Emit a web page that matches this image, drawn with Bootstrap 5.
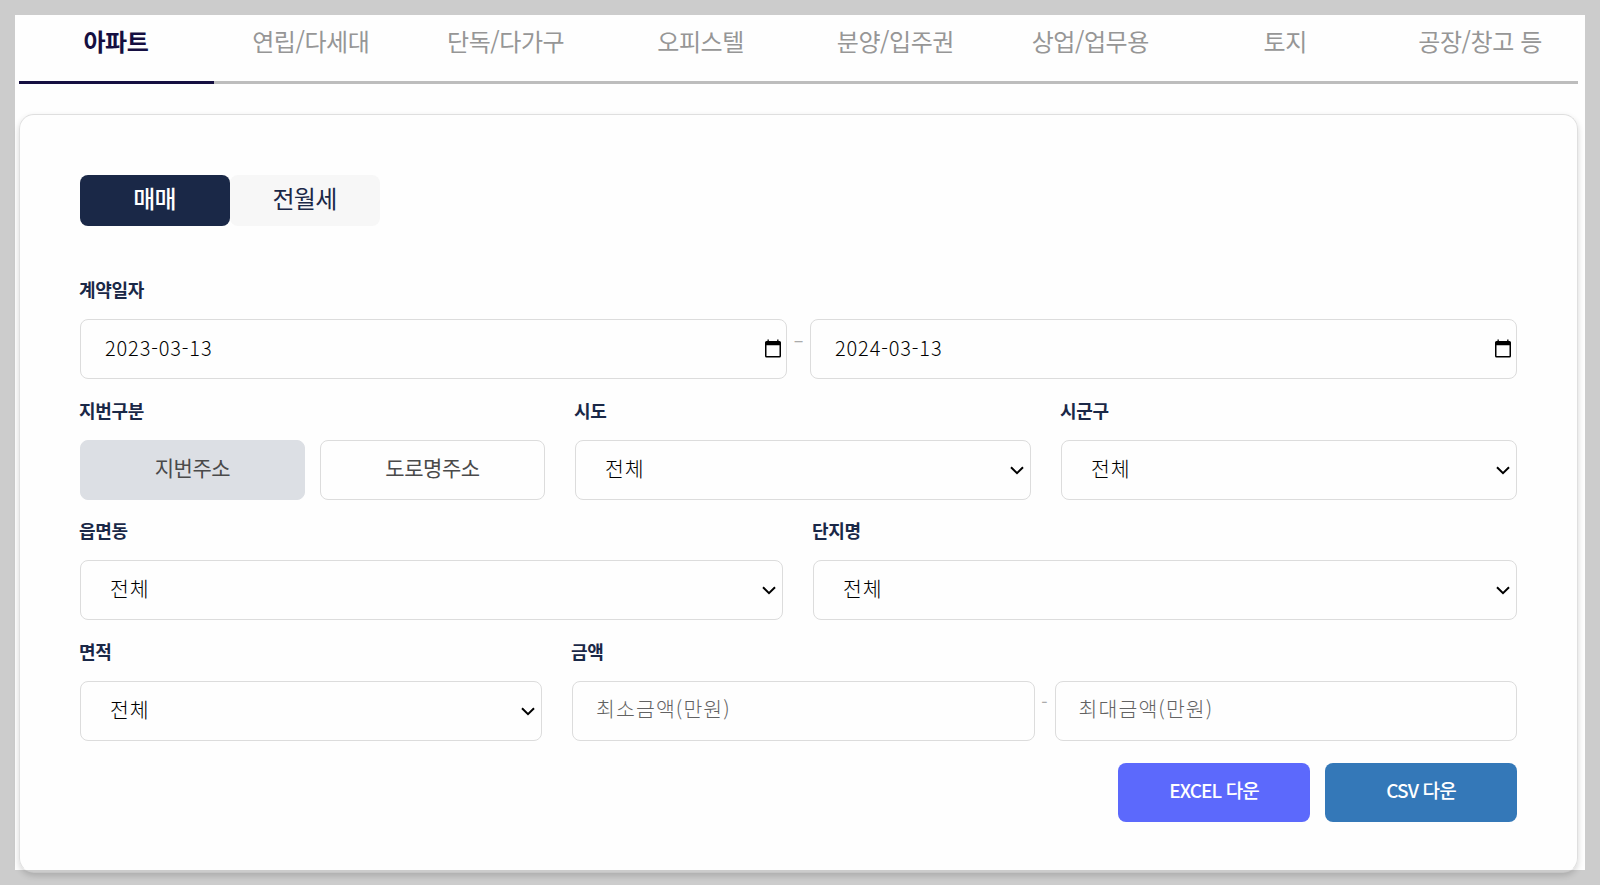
<!DOCTYPE html>
<html lang="ko">
<head>
<meta charset="utf-8">
<meta name="viewport" content="width=device-width, initial-scale=1">
<title>실거래가 자료제공</title>
<link rel="stylesheet" href="https://cdn.jsdelivr.net/npm/bootstrap@5.3.0/dist/css/bootstrap.min.css">
<style>
:root { --navy: #1a2847; --line: #dcdcdc; }
body { height: 885px; overflow: hidden; background: #ccc; padding: 15px 15px 0; font-family: "Noto Sans CJK KR", sans-serif; letter-spacing: -.03em; }
.sheet { height: 855px; background: #fefefe; padding: 0 7px 0 4px; }
.type-tabs { height: 69px; border-bottom: 3px solid #bdbdbd; }
.type-tabs .nav-link { height: 69px; padding: 8px 1px 0 0; border-bottom: 3px solid transparent; border-radius: 0; font-size: 24px; line-height: 36px; letter-spacing: -.45px; color: #969696; }
.type-tabs .nav-link.active { color: #150f41; font-weight: 700; border-color: #150f41; }
.search-panel { margin-top: 30px; height: 759px; padding: 60px 60px 0; border: 1px solid #dfdfdf; border-bottom-color: rgba(0,0,0,.03); border-radius: 15px; box-shadow: 0 3px 6px rgba(0,0,0,.16); }
.deal-group { margin-bottom: 48px; }
.deal { width: 150px; height: 51px; padding: 0 1px 5px 0; border: 0; border-radius: 8px; font-size: 24px; line-height: 46px; letter-spacing: -.75px; color: var(--navy); background: #f7f7f7; }
.deal.active { color: #fff; background: var(--navy); font-weight: 500; }
.form-label { display: block; height: 45px; margin: 0 0 0 -1px; font-size: 18px; line-height: 30px; letter-spacing: -.35px; font-weight: 700; color: var(--navy); }
.line-gap { margin-top: 16px; }
.field { height: 60px; border: 1px solid var(--line); border-radius: 8px; background-color: transparent; color: #000; font-size: 20.5px; letter-spacing: .8px; font-weight: 300; padding: 0 24px 3px; }
.price { padding: 0 23px 6px; letter-spacing: 1.1px; }
.field::placeholder { color: #626262; }
.form-select.field { padding-left: 29px; background-image: url("data:image/svg+xml,%3Csvg xmlns='http://www.w3.org/2000/svg' viewBox='0 0 14 9'%3E%3Cpath d='M1 1.2l6 6 6-6' fill='none' stroke='%23000' stroke-width='2'/%3E%3C/svg%3E"); background-size: 14px 9px; background-position: right 6px center; }
.date-box .field { font-size: 20px; letter-spacing: .85px; padding-bottom: 3px; }
.date-box svg { position: absolute; right: 5px; top: 20px; }
.addr { width: 225px; height: 60px; padding: 0 0 4px; border: 1px solid var(--line); border-radius: 8px; font-size: 21px; letter-spacing: -.45px; color: #4a4a4a; }
.addr.active { background: #dcdfe4; border-color: #dcdfe4; color: #4a4a4a; }
.tilde { flex: none; text-align: center; color: #ababab; font-size: 18px; line-height: 40px; letter-spacing: 0; }
.date-tilde { width: 23px; }
.price-tilde { width: 20px; }
.area-box { width: 462px; }
.town-box { flex: none; width: 703px; }
.down { width: 192px; height: 59px; border: 0; border-radius: 8px; padding: 0 0 4px; font-size: 19px; letter-spacing: -.9px; font-weight: 500; color: #fff; }
.excel, .excel:hover { background: #5c69fc; }
.csv, .csv:hover { background: #3478b8; }
.gap-15 { gap: 15px; }
.gap-30 { gap: 30px; }
</style>
</head>
<body>
<main class="sheet">
  <nav class="nav nav-justified type-tabs flex-nowrap">
    <a class="nav-link active" href="#">아파트</a>
    <a class="nav-link" href="#">연립/다세대</a>
    <a class="nav-link" href="#">단독/다가구</a>
    <a class="nav-link" href="#">오피스텔</a>
    <a class="nav-link" href="#">분양/입주권</a>
    <a class="nav-link" href="#">상업/업무용</a>
    <a class="nav-link" href="#">토지</a>
    <a class="nav-link" href="#">공장/창고 등</a>
  </nav>
  <form class="search-panel">
    <div class="d-flex deal-group">
      <button type="button" class="btn deal active">매매</button>
      <button type="button" class="btn deal">전월세</button>
    </div>

    <label class="form-label">계약일자</label>
    <div class="d-flex">
      <div class="date-box position-relative flex-fill">
        <input class="form-control field" value="2023-03-13">
        <svg width="18" height="20" viewBox="0 0 18 20"><path d="M3.500.5h1.300V2h8.400V.5h1.300V2h1a1.500 1.500 0 0 1 1.500 1.500V17a1.500 1.500 0 0 1-1.500 1.500h-13A1.500 1.500 0 0 1 1 17V3.500A1.500 1.500 0 0 1 2.500 2h1zM2.500 6.200v10.700h13V6.200z" fill-rule="evenodd"/></svg>
      </div>
      <span class="tilde date-tilde">–</span>
      <div class="date-box position-relative flex-fill">
        <input class="form-control field" value="2024-03-13">
        <svg width="18" height="20" viewBox="0 0 18 20"><path d="M3.500.5h1.300V2h8.400V.5h1.300V2h1a1.500 1.500 0 0 1 1.500 1.500V17a1.500 1.500 0 0 1-1.500 1.500h-13A1.500 1.500 0 0 1 1 17V3.500A1.500 1.500 0 0 1 2.500 2h1zM2.500 6.200v10.700h13V6.200z" fill-rule="evenodd"/></svg>
      </div>
    </div>

    <div class="d-flex gap-30 line-gap">
      <div>
        <label class="form-label">지번구분</label>
        <div class="d-flex gap-15">
          <button type="button" class="btn addr active">지번주소</button>
          <button type="button" class="btn addr">도로명주소</button>
        </div>
      </div>
      <div class="flex-fill"><label class="form-label">시도</label><select class="form-select field"><option>전체</option></select></div>
      <div class="flex-fill"><label class="form-label">시군구</label><select class="form-select field"><option>전체</option></select></div>
    </div>

    <div class="d-flex gap-30" style="margin-top:15px">
      <div class="town-box"><label class="form-label">읍면동</label><select class="form-select field"><option>전체</option></select></div>
      <div class="flex-fill"><label class="form-label">단지명</label><select class="form-select field"><option>전체</option></select></div>
    </div>

    <div class="d-flex gap-30 line-gap">
      <div class="area-box"><label class="form-label">면적</label><select class="form-select field"><option>전체</option></select></div>
      <div class="flex-fill">
        <label class="form-label">금액</label>
        <div class="d-flex">
          <input class="form-control field price" placeholder="최소금액(만원)">
          <span class="tilde price-tilde">-</span>
          <input class="form-control field price" placeholder="최대금액(만원)">
        </div>
      </div>
    </div>

    <div class="d-flex justify-content-end gap-15" style="margin-top:22px">
      <button type="button" class="btn down excel">EXCEL 다운</button>
      <button type="button" class="btn down csv">CSV 다운</button>
    </div>
  </form>
</main>
<script src="https://cdn.jsdelivr.net/npm/bootstrap@5.3.0/dist/js/bootstrap.bundle.min.js"></script>
</body>
</html>
